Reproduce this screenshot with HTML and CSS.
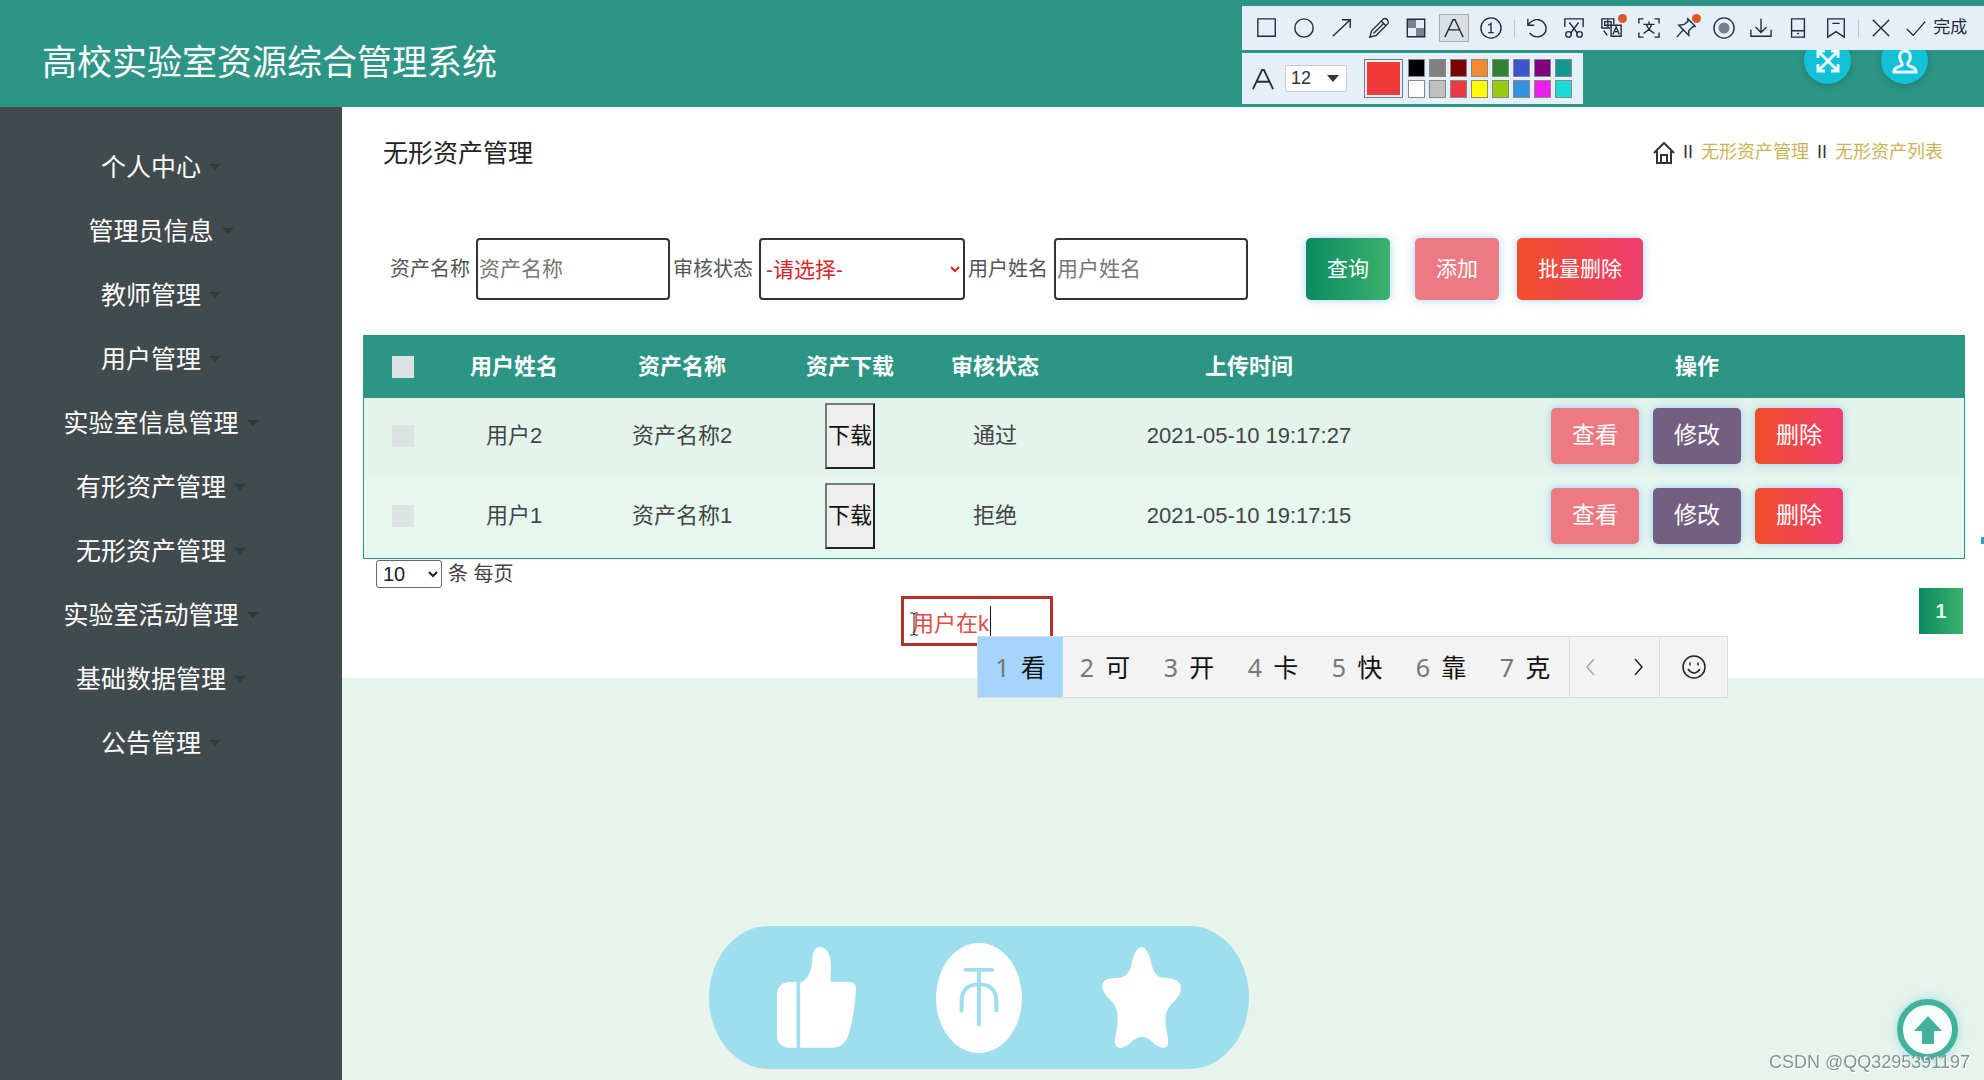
FILE: index.html
```html
<!DOCTYPE html>
<html lang="zh-CN">
<head>
<meta charset="utf-8">
<meta name="viewport" content="width=device-width, initial-scale=1">
<title>高校实验室资源综合管理系统</title>
<link rel="stylesheet" href="styles.css">
</head>
<body>
<header class="topbar">
  <h1 class="brand">高校实验室资源综合管理系统</h1>
  <div class="topbar-actions">
    <button class="round" type="button" aria-label="全屏">
      <svg width="24" height="24" viewBox="0 0 24 24"><path d="M3 3l18 18M21 3L3 21M2 9V2h7M15 2h7v7M22 15v7h-7M9 22H2v-7"/></svg>
    </button>
    <button class="round" type="button" aria-label="个人">
      <svg width="26" height="26" viewBox="0 0 26 26"><path d="M10 15c-3-3-4-12 3-12s6 9 3 12c-1 2 1 3 4 4 3 1 4 2 4 5H2c0-3 1-4 4-5 3-1 5-2 4-4z"/></svg>
    </button>
  </div>
</header>

<div class="layout">
  <nav class="sidebar">
    <ul class="menu">
      <li><a href="#">个人中心</a></li>
      <li><a href="#">管理员信息</a></li>
      <li><a href="#">教师管理</a></li>
      <li><a href="#">用户管理</a></li>
      <li><a href="#">实验室信息管理</a></li>
      <li><a href="#">有形资产管理</a></li>
      <li><a href="#">无形资产管理</a></li>
      <li><a href="#">实验室活动管理</a></li>
      <li><a href="#">基础数据管理</a></li>
      <li><a href="#">公告管理</a></li>
    </ul>
  </nav>

  <main class="content">
    <section class="panel">
      <div class="panel-head">
        <h2 class="panel-title">无形资产管理</h2>
        <nav class="crumbs">
          <svg width="22" height="22" viewBox="0 0 22 22"><path d="M1 11L11 1l10 10M4 9v12h14V9M8 21v-8h6v8"/></svg>
          <span>II</span><a href="#">无形资产管理</a><span>II</span><a href="#">无形资产列表</a>
        </nav>
      </div>

      <form class="filters">
        <div class="field"><label for="asset">资产名称</label><input id="asset" type="text" placeholder="资产名称"></div>
        <div class="field"><label for="state">审核状态</label><select id="state"><option>-请选择-</option></select></div>
        <div class="field"><label for="user">用户姓名</label><input id="user" type="text" placeholder="用户姓名"></div>
        <div class="filter-actions">
          <button class="btn btn-green" type="button">查询</button>
          <button class="btn btn-pink" type="button">添加</button>
          <button class="btn btn-red" type="button">批量删除</button>
        </div>
      </form>

      <table class="grid">
        <colgroup><col class="c-check"><col class="c-user"><col class="c-asset"><col class="c-file"><col class="c-state"><col class="c-time"><col></colgroup>
        <thead>
          <tr><th><input type="checkbox" aria-label="全选"></th><th>用户姓名</th><th>资产名称</th><th>资产下载</th><th>审核状态</th><th>上传时间</th><th>操作</th></tr>
        </thead>
        <tbody>
          <tr>
            <td><input type="checkbox" aria-label="选择用户2"></td><td>用户2</td><td>资产名称2</td>
            <td><button class="download" type="button">下载</button></td><td>通过</td><td>2021-05-10 19:17:27</td>
            <td><div class="row-actions"><button class="btn btn-pink" type="button">查看</button><button class="btn btn-purple" type="button">修改</button><button class="btn btn-red" type="button">删除</button></div></td>
          </tr>
          <tr>
            <td><input type="checkbox" aria-label="选择用户1"></td><td>用户1</td><td>资产名称1</td>
            <td><button class="download" type="button">下载</button></td><td>拒绝</td><td>2021-05-10 19:17:15</td>
            <td><div class="row-actions"><button class="btn btn-pink" type="button">查看</button><button class="btn btn-purple" type="button">修改</button><button class="btn btn-red" type="button">删除</button></div></td>
          </tr>
        </tbody>
      </table>

      <div class="page-size">
        <select id="size"><option>10</option></select><label for="size">条 每页</label>
      </div>
      <div class="pager"><button type="button">1</button></div>
    </section>
  </main>
</div>

<!-- screenshot tool -->
<div class="shot-tools">
  <div class="tools">
    <button type="button" aria-label="矩形"><svg viewBox="0 0 24 24"><path d="M2 2h19v19H2z"/></svg></button>
    <button type="button" aria-label="椭圆"><svg viewBox="0 0 24 24"><circle cx="12" cy="12" r="10"/></svg></button>
    <button type="button" aria-label="箭头"><svg viewBox="0 0 24 24"><path d="M2 21L21 3M12 3h9v9"/></svg></button>
    <button type="button" aria-label="画笔"><svg viewBox="0 0 24 24"><path d="M2 22l2-7L17 2q2-1 4 1t1 4L9 20zM15 5l4 4M6 18L17 7"/></svg></button>
    <button type="button" aria-label="马赛克"><svg viewBox="0 0 24 24"><path class="gray" d="M3 3h9v9H3zM12 12h9v9h-9z"/><path d="M2.500 2.500h19v19h-19z"/></svg></button>
    <button class="active" type="button" aria-label="文字"><svg viewBox="0 0 24 24"><path d="M2 22L11 3h2l9 19M6 14h12"/></svg></button>
    <button type="button" aria-label="序号"><svg viewBox="0 0 24 24"><circle cx="12" cy="12" r="11"/><path d="M9 9l3-2v10M9 17h6"/></svg></button>
    <i class="sep"></i>
    <button type="button" aria-label="撤销"><svg viewBox="0 0 24 24"><path d="M2 2v7h7M2 9q5-7 12-6 7 2 8 9 0 8-8 9.500-6 1-10-4"/></svg></button>
    <button type="button" aria-label="裁剪"><svg viewBox="0 0 24 24"><path d="M2 11V2h20v9M7 6l9 12M17 6L8 18"/><circle cx="6" cy="19" r="3"/><circle cx="18" cy="19" r="3"/></svg></button>
    <button class="dot" type="button" aria-label="翻译"><svg viewBox="0 0 24 24"><path d="M10 12H1V2h13v6M4 5h7v4H4zM7.500 3v9M11 9h11v12H11V9M13 19l3.500-8 3.500 8M14 16h5M3 15l4 5"/></svg></button>
    <button type="button" aria-label="识别"><svg viewBox="0 0 24 24"><path d="M1 7V2h5M18 2h5v5M23 17v5h-5M6 22H1v-5M6 8h12M12 5v3M15 8q-2 6-9 10M9 8q2 6 9 10"/></svg></button>
    <button class="dot" type="button" aria-label="钉住"><svg viewBox="0 0 24 24"><path d="M2 22l7-8M14 2l8 8-3 1-4 4v5L4 9l6-1 4-3z"/></svg></button>
    <button type="button" aria-label="录制"><svg viewBox="0 0 24 24"><circle cx="12" cy="12" r="11"/><circle class="gray" cx="12" cy="12" r="6"/></svg></button>
    <button type="button" aria-label="下载"><svg viewBox="0 0 24 24"><path d="M12 2v15M6 11l6 6 6-6M1 14v7h22v-7"/></svg></button>
    <button type="button" aria-label="手机"><svg viewBox="0 0 24 24"><path d="M5 2h14v20H5zM5 15h14M11 18h2"/></svg></button>
    <button type="button" aria-label="收藏"><svg viewBox="0 0 24 24"><path d="M3 2h18v20l-9-6-9 6zM8 7h8"/></svg></button>
    <i class="sep"></i>
    <button type="button" aria-label="关闭"><svg viewBox="0 0 24 24"><path d="M3 3l18 18M21 3L3 21"/></svg></button>
    <button class="done" type="button"><svg viewBox="0 0 24 24"><path d="M2 13l7 7L22 5"/></svg>完成</button>
  </div>
  <div class="palette">
    <svg class="letter" viewBox="0 0 24 24"><path d="M1 23L11 2h2l10 21M5 15h14"/></svg>
    <span class="font-size"><select aria-label="字号"><option>12</option></select><svg width="12" height="7" viewBox="0 0 12 7"><path d="M0 0h12L6 7z"/></svg></span>
    <button class="current" type="button" aria-label="当前颜色"></button>
    <div class="swatches">
      <button class="k1" type="button" aria-label="黑"></button><button class="k2" type="button" aria-label="灰"></button><button class="k3" type="button" aria-label="深红"></button><button class="k4" type="button" aria-label="橙"></button><button class="k5" type="button" aria-label="绿"></button><button class="k6" type="button" aria-label="蓝"></button><button class="k7" type="button" aria-label="紫"></button><button class="k8" type="button" aria-label="青"></button>
      <button class="k9" type="button" aria-label="白"></button><button class="k10" type="button" aria-label="浅灰"></button><button class="k11" type="button" aria-label="红"></button><button class="k12" type="button" aria-label="黄"></button><button class="k13" type="button" aria-label="黄绿"></button><button class="k14" type="button" aria-label="天蓝"></button><button class="k15" type="button" aria-label="品红"></button><button class="k16" type="button" aria-label="水蓝"></button>
    </div>
  </div>
</div>

<!-- text annotation being typed, with the input method's candidates -->
<div class="note">
  <input type="text" value="用户在k" aria-label="批注">
  <svg class="ibeam" width="10" height="24" viewBox="0 0 10 24"><path d="M1 1h3l1 1 1-1h3M5 2v20M1 23h3l1-1 1 1h3"/></svg>
  <i class="caret"></i>
</div>
<div class="ime">
  <ol class="candidates">
    <li class="on"><span>1</span>看</li><li><span>2</span>可</li><li><span>3</span>开</li><li><span>4</span>卡</li><li><span>5</span>快</li><li><span>6</span>靠</li><li><span>7</span>克</li>
  </ol>
  <div class="ime-nav">
    <button type="button" aria-label="上一页" disabled><svg width="12" height="20" viewBox="0 0 12 20"><path d="M10 2L3 10l7 8"/></svg></button>
    <button type="button" aria-label="下一页"><svg width="12" height="20" viewBox="0 0 12 20"><path d="M2 2l7 8-7 8"/></svg></button>
  </div>
  <button class="smile" type="button" aria-label="表情"><svg width="26" height="26" viewBox="0 0 26 26"><circle cx="13" cy="13" r="11"/><path d="M7 15q6 8 12 0M9 8.500v3M17 8.500v3"/></svg></button>
</div>

<div class="reactions">
  <button type="button" aria-label="点赞"><svg width="79" height="101" viewBox="235 110 215 305" preserveAspectRatio="none"><path d="M288 216v198h-26q-27-8-27-36V250q2-30 30-34zM298 414V219q28-16 32-57 1-52 21-52 31 4 31 62l-2 43h48q22 0 22 22-4 72-18 130-10 44-42 47z"/></svg></button>
  <button type="button" aria-label="投币"><svg width="86" height="110" viewBox="665 98 232 331" preserveAspectRatio="none"><ellipse cx="781" cy="263.500" rx="116" ry="165.500"/><path class="cut" d="M745 179h72M781 179v165M734 302v-26q0-54 47-54t47 54v26"/></svg></button>
  <button type="button" aria-label="收藏"><svg width="79" height="101" viewBox="1113 113 213 302" preserveAspectRatio="none"><path d="M1219 114q17 0 26 44 8 43 27 46 54 1 54 32 0 22-25 47-18 21-17 46 0 22 7 59 4 26-14 26-13 0-33-22-23-22-46 0-21 23-36 23-18-1-14-29 9-46 7-73-3-23-20-42-22-24-22-42 1-24 41-23 28-1 37-34 10-58 28-58z"/></svg></button>
</div>

<a class="to-top" href="#" aria-label="返回顶部"><svg width="28" height="28" viewBox="0 0 28 28"><path d="M14 0l14 15h-8v13H8V15H0z"/></svg></a>
<div class="edge-mark"></div>
<p class="watermark">CSDN @QQ3295391197</p>
</body>
</html>
```

FILE: styles.css
```css
* { box-sizing: border-box; }
body {
  margin: 0;
  font-family: "Liberation Sans", "Noto Sans CJK SC", sans-serif;
  font-size: 22px;
  line-height: 1.2;
  color: #444;
  background: #e7f3ed;
}
h1, h2, p, ul, ol { margin: 0; padding: 0; font-weight: 400; }
ul, ol { list-style: none; }
a { text-decoration: none; }
button, input, select { margin: 0; font-family: inherit; line-height: inherit; }
svg { display: block; fill: none; stroke: currentColor; }

/* top bar */
.topbar {
  display: flex;
  align-items: center;
  justify-content: space-between;
  height: 107px;
  padding: 14px 56px 0 42px;
  background: #2d9585;
  color: #fff;
}
.brand { padding-top: 4px; font-size: 35px; }
.topbar-actions { display: flex; gap: 30px; }
.round {
  display: grid;
  place-items: center;
  width: 47px;
  height: 47px;
  padding: 0;
  border: 0;
  border-radius: 50%;
  background: #12c0d8;
  color: #e6fbff;
  box-shadow: 0 2px 6px rgba(0, 60, 70, .3);
}
.round svg { stroke-width: 3; }

/* sidebar */
.layout { display: flex; min-height: calc(100vh - 107px); }
.sidebar { flex: none; width: 342px; padding-top: 28px; background: #414a4c; }
.menu a {
  display: flex;
  align-items: center;
  justify-content: center;
  gap: 8px;
  height: 64px;
  padding-right: 22px;
  font-size: 25px;
  color: #fff;
}
.menu a::after {
  content: "";
  margin-right: -2px;
  border: 6px solid transparent;
  border-top-color: #30383a;
  border-bottom: 0;
}

/* content */
.content { flex: 1; min-width: 0; }
.panel { padding: 0 19px 44px 21px; background: #fefffe; }
.panel-head {
  display: flex;
  align-items: center;
  justify-content: space-between;
  padding: 26px 22px 26px 20px;
}
.panel-title { font-size: 25px; line-height: 40px; color: #222; }
.crumbs { display: flex; align-items: center; gap: 8px; font-size: 18px; color: #333; }
.crumbs svg { stroke-width: 2; }
.crumbs a { color: #cdb255; }

.filters { display: flex; gap: 3px; margin: 39px 27px 35px; }
.field { display: flex; align-items: center; gap: 6px; }
.field label { font-size: 20px; color: #555; }
.field input, .field select {
  width: 194px;
  height: 62px;
  padding: 0 1px;
  border: 2px solid #333;
  border-radius: 4px;
  background: #fff;
  font-size: 21px;
}
.field input::placeholder { color: #777; }
.field select { width: 206px; color: #d9262b; }
.filter-actions { display: flex; gap: 18px; margin-left: 55px; }
.filter-actions .btn-green { margin-right: 7px; }

.btn {
  height: 62px;
  padding: 0 21px;
  border: 0;
  border-radius: 5px;
  font-size: 21px;
  color: #fff;
  box-shadow: 0 0 8px rgba(90, 160, 240, .5);
}
.btn-green { background: linear-gradient(90deg, #098a60, #3bb26d); }
.btn-pink { background: #ed7a82; }
.btn-purple { background: #725f82; }
.btn-red { background: linear-gradient(90deg, #f04e2a, #ef3f70); }

/* data table */
.grid {
  width: 100%;
  table-layout: fixed;
  border: 1px solid #2d9585;
  border-spacing: 0;
  text-align: center;
}
.c-check { width: 78px; }
.c-user, .c-file { width: 144px; }
.c-asset { width: 192px; }
.c-state { width: 146px; }
.c-time { width: 362px; }
.grid th { height: 62px; padding: 0; background: #2d9585; color: #fff; font-weight: 700; }
.grid td { height: 80px; padding: 0 0 4px; background: #e3f4ec; }
.grid tbody tr:last-child td { background: #e6f7f0; }
.grid input {
  appearance: none;
  display: block;
  width: 22px;
  height: 22px;
  margin: 0 auto;
  background: #dde2e3;
}
.download {
  display: block;
  width: 50px;
  height: 66px;
  margin: 0 auto;
  padding: 0;
  border: 2px solid #333;
  border-color: #777 #222 #222 #777;
  background: #efefef;
  font-size: 22px;
  color: #111;
}
.row-actions { display: flex; justify-content: center; gap: 14px; }
.row-actions .btn { width: 88px; height: 56px; padding: 0; font-size: 23px; }

.page-size { display: flex; align-items: center; gap: 6px; height: 29px; padding-left: 13px; font-size: 20px; }
.page-size select {
  width: 66px;
  height: 28px;
  padding: 0 2px;
  border: 1px solid #666;
  border-radius: 3px;
  background: #fff;
  font-size: 20px;
  color: #222;
}
.pager { display: flex; justify-content: flex-end; padding-right: 2px; }
.pager button {
  width: 44px;
  height: 46px;
  border: 0;
  background: linear-gradient(90deg, #098a60, #3bb26d);
  font-size: 20px;
  font-weight: 700;
  color: #dff5e8;
}

/* screenshot tool */
.shot-tools {
  position: absolute;
  top: 6px;
  right: 0;
  display: grid;
  gap: 3px;
  justify-items: start;
  width: 742px;
  color: #222b3a;
}
.tools {
  display: flex;
  align-items: center;
  justify-content: space-between;
  width: 100%;
  height: 44px;
  padding: 0 15px 0 10px;
  background: #e5eff8;
}
.tools button {
  position: relative;
  display: flex;
  align-items: center;
  justify-content: center;
  width: 30px;
  height: 28px;
  padding: 0;
  border: 0;
  background: none;
  color: inherit;
}
.tools svg { flex: none; width: 22px; height: 22px; stroke-width: 1.5; }
.tools .active { border: 1px solid #aaa; background: #dadfe4; }
.tools .gray { fill: #78808c; stroke: none; }
.tools .dot::after {
  content: "";
  position: absolute;
  top: 0;
  right: 0;
  width: 9px;
  height: 9px;
  border-radius: 50%;
  background: #e2572a;
}
.tools .done { gap: 6px; width: 65px; font-size: 17px; }
.sep { width: 1px; height: 17px; background: #b8c2cc; }
.palette {
  display: flex;
  align-items: center;
  height: 51px;
  padding: 0 11px 0 10px;
  background: #e5eff8;
}
.letter { width: 22px; height: 22px; stroke-width: 2; }
.font-size { display: grid; align-items: center; margin: 0 17px 0 11px; }
.font-size > * { grid-area: 1 / 1; }
.font-size select {
  appearance: none;
  width: 62px;
  height: 27px;
  padding: 0 5px;
  border: 1px solid #c5ccd3;
  border-radius: 2px;
  background: #fff;
  font-size: 18px;
  color: #333;
}
.font-size svg { justify-self: end; margin-right: 8px; fill: #333; stroke: none; }
.current { width: 39px; height: 39px; margin-right: 5px; padding: 0; border: 1px solid #777; background: #f03a3a; box-shadow: inset 0 0 0 2px #e5eff8; }
.swatches { display: grid; grid-template-columns: repeat(8, 17px); gap: 3px 4px; }
.swatches button { width: 17px; height: 18px; padding: 0; border: 1px solid #888; }
.k1 { background: #000; } .k2 { background: #808080; } .k3 { background: #7b0000; } .k4 { background: #f58a32; }
.k5 { background: #2f842f; } .k6 { background: #3b57cf; } .k7 { background: #800080; } .k8 { background: #109a92; }
.k9 { background: #fff; } .k10 { background: #c0c0c0; } .k11 { background: #ee3a3e; } .k12 { background: #ffff00; }
.k13 { background: #99c90c; } .k14 { background: #3492e4; } .k15 { background: #ee1fee; } .k16 { background: #1bdbd8; }

/* text note and input method */
.note { position: absolute; top: 596px; left: 901px; }
.note input {
  display: block;
  width: 152px;
  height: 50px;
  padding: 0 8px;
  border: 3px solid #b5302f;
  background: #fff;
  font-size: 22px;
  color: #dc4b46;
}
.ibeam { position: absolute; top: 16px; left: 8px; stroke: #222; }
.caret { position: absolute; top: 10px; left: 89px; width: 1px; height: 30px; background: #111; }
.ime {
  position: absolute;
  top: 636px;
  left: 977px;
  display: flex;
  height: 62px;
  border: 1px solid #d9dcdb;
  background: #f2f3f2;
  font-family: "Noto Sans", "Noto Sans CJK SC", sans-serif;
  font-size: 25px;
  color: #111;
}
.candidates { display: flex; padding-right: 2px; }
.candidates li { display: flex; align-items: center; justify-content: center; gap: 11px; width: 84px; }
.candidates .on { width: 85px; background: #a5d5fd; }
.candidates span { color: #777; }
.ime button { display: grid; place-items: center; border: 0; padding: 0; background: none; color: #222; }
.ime svg { stroke-width: 1.5; }
.ime-nav { display: flex; border-left: 1px solid #d9dcdb; }
.ime-nav button { width: 44px; }
.ime-nav button:first-child { width: 45px; padding-right: 6px; color: #aaa; }
.ime-nav button:last-child { padding-left: 4px; }
.ime .smile { width: 68px; border-left: 1px solid #d9dcdb; }

/* like, coin, favourite */
.reactions {
  position: fixed;
  bottom: 11px;
  left: 709px;
  display: flex;
  align-items: center;
  justify-content: space-between;
  width: 540px;
  height: 143px;
  padding: 0 68px;
  border-radius: 60px / 72px;
  background: #9fdeed;
}
.reactions button { padding: 0; border: 0; background: none; }
.reactions svg { fill: #fff; stroke: none; }
.reactions .cut { fill: none; stroke: #9fdeed; stroke-width: 11; stroke-linecap: round; }

.to-top {
  position: fixed;
  right: 26px;
  bottom: 20px;
  display: grid;
  place-items: center;
  width: 61px;
  height: 61px;
  border: 6px solid #42b29b;
  border-radius: 50%;
  background: #f7fcfb;
  color: #42b29b;
  box-shadow: 0 0 10px rgba(80, 200, 220, .5);
}
.to-top svg { fill: currentColor; stroke: none; }
.edge-mark { position: absolute; top: 537px; right: 0; width: 3px; height: 7px; background: #2f9fc4; }
.watermark {
  position: fixed;
  right: 14px;
  bottom: 7px;
  font-size: 18px;
  line-height: 22px;
  color: #8a9290;
  text-shadow: 1px 1px 0 #fff;
}
```
